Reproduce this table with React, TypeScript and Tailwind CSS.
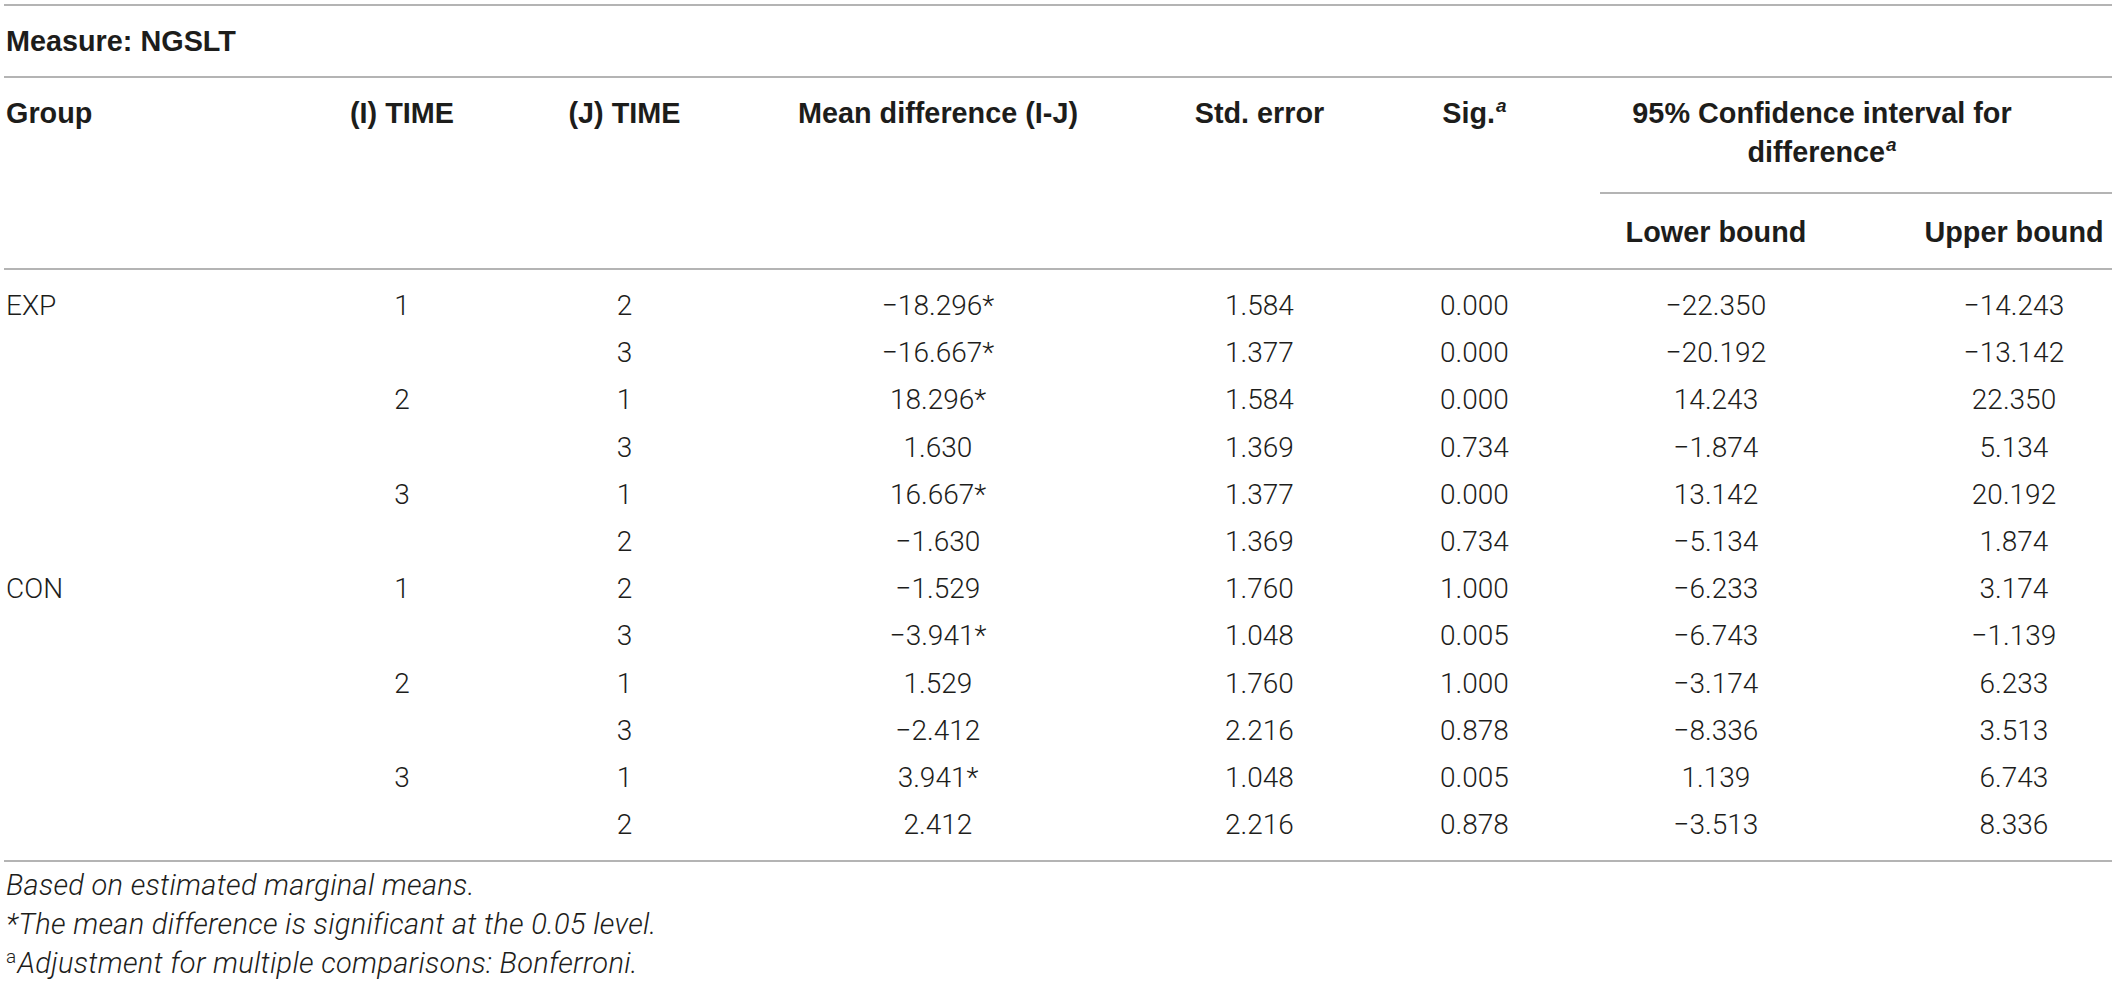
import React from "react";

const HEAD_FONT = "font-['Liberation_Sans',Arial,Helvetica,sans-serif]";

type Row = [string, string, string, string, string, string, string, string];

const M = "\u2212";

const rows: Row[] = [
  ["EXP", "1", "2", `${M}18.296*`, "1.584", "0.000", `${M}22.350`, `${M}14.243`],
  ["", "", "3", `${M}16.667*`, "1.377", "0.000", `${M}20.192`, `${M}13.142`],
  ["", "2", "1", "18.296*", "1.584", "0.000", "14.243", "22.350"],
  ["", "", "3", "1.630", "1.369", "0.734", `${M}1.874`, "5.134"],
  ["", "3", "1", "16.667*", "1.377", "0.000", "13.142", "20.192"],
  ["", "", "2", `${M}1.630`, "1.369", "0.734", `${M}5.134`, "1.874"],
  ["CON", "1", "2", `${M}1.529`, "1.760", "1.000", `${M}6.233`, "3.174"],
  ["", "", "3", `${M}3.941*`, "1.048", "0.005", `${M}6.743`, `${M}1.139`],
  ["", "2", "1", "1.529", "1.760", "1.000", `${M}3.174`, "6.233"],
  ["", "", "3", `${M}2.412`, "2.216", "0.878", `${M}8.336`, "3.513"],
  ["", "3", "1", "3.941*", "1.048", "0.005", "1.139", "6.743"],
  ["", "", "2", "2.412", "2.216", "0.878", `${M}3.513`, "8.336"],
];

function Rule({ className = "" }: { className?: string }) {
  return <div className={`h-[2px] bg-[#b4b4b4] ${className}`} />;
}

function SupA({ bold = false, italic = true }: { bold?: boolean; italic?: boolean }) {
  return (
    <span
      className={`relative -top-[11px] ml-[1px] text-[19px] leading-none ${italic ? "italic" : ""} ${
        bold ? "font-bold" : ""
      }`}
    >
      a
    </span>
  );
}

export default function App() {
  return (
    <div className="min-h-screen w-full bg-white text-[#1d1d1b]">
      <div className="ml-[4px] w-[2108px] pt-[4px]">
        <Rule />
        <div
          className={`flex h-[70px] items-center pl-[2px] ${HEAD_FONT} text-[28.8px] font-bold leading-[39px]`}
        >
          Measure: NGSLT
        </div>
        <Rule />

        {/* Header */}
        <div
          className={`grid h-[190px] grid-cols-[286px_224px_221px_406px_237px_193px_290px_251px] items-start ${HEAD_FONT} text-[28.8px] font-bold leading-[39px]`}
        >
          <div className="pl-[2px] pt-[16px]">Group</div>
          <div className="pt-[16px] text-center">(I) TIME</div>
          <div className="pt-[16px] text-center">(J) TIME</div>
          <div className="pt-[16px] text-center">Mean difference (I-J)</div>
          <div className="pt-[16px] text-center">Std. error</div>
          <div className="pt-[16px] text-center">
            Sig.
            <SupA bold />
          </div>
          <div className="col-span-2 flex flex-col pt-[16px]">
            <div className="pr-[39px] text-center">
              95% Confidence interval for
              <br />
              difference
              <SupA bold />
            </div>
            <Rule className="ml-[29px] mt-[20px]" />
            <div className="mt-[19px] grid grid-cols-[290px_251px]">
              <div className="text-center">Lower bound</div>
              <div className="pl-[55px] text-center">Upper bound</div>
            </div>
          </div>
        </div>
        <Rule />

        {/* Body */}
        <div className="py-[12px] font-['Roboto','Liberation_Sans',Arial,sans-serif] text-[28px] font-light">
          {rows.map((r, i) => (
            <div
              key={i}
              className="grid h-[47.2px] grid-cols-[286px_224px_221px_406px_237px_193px_290px_251px] items-center leading-[39px]"
            >
              <div className="pl-[2px]">{r[0]}</div>
              <div className="text-center">{r[1]}</div>
              <div className="text-center">{r[2]}</div>
              <div className="text-center">{r[3]}</div>
              <div className="text-center">{r[4]}</div>
              <div className="text-center">{r[5]}</div>
              <div className="text-center">{r[6]}</div>
              <div className="pl-[55px] text-center">{r[7]}</div>
            </div>
          ))}
        </div>
        <Rule />

        {/* Footnotes */}
        <div className="mt-[4px] pl-[2px] font-['Roboto','Liberation_Sans',Arial,sans-serif] text-[29px] font-light italic leading-[39px] tracking-[0.3px]">
          <div>Based on estimated marginal means.</div>
          <div>*The mean difference is significant at the 0.05 level.</div>
          <div>
            <span className="relative -top-[10px] mr-[1px] text-[19px] not-italic leading-none">a</span>
            Adjustment for multiple comparisons: Bonferroni.
          </div>
        </div>
      </div>
    </div>
  );
}
